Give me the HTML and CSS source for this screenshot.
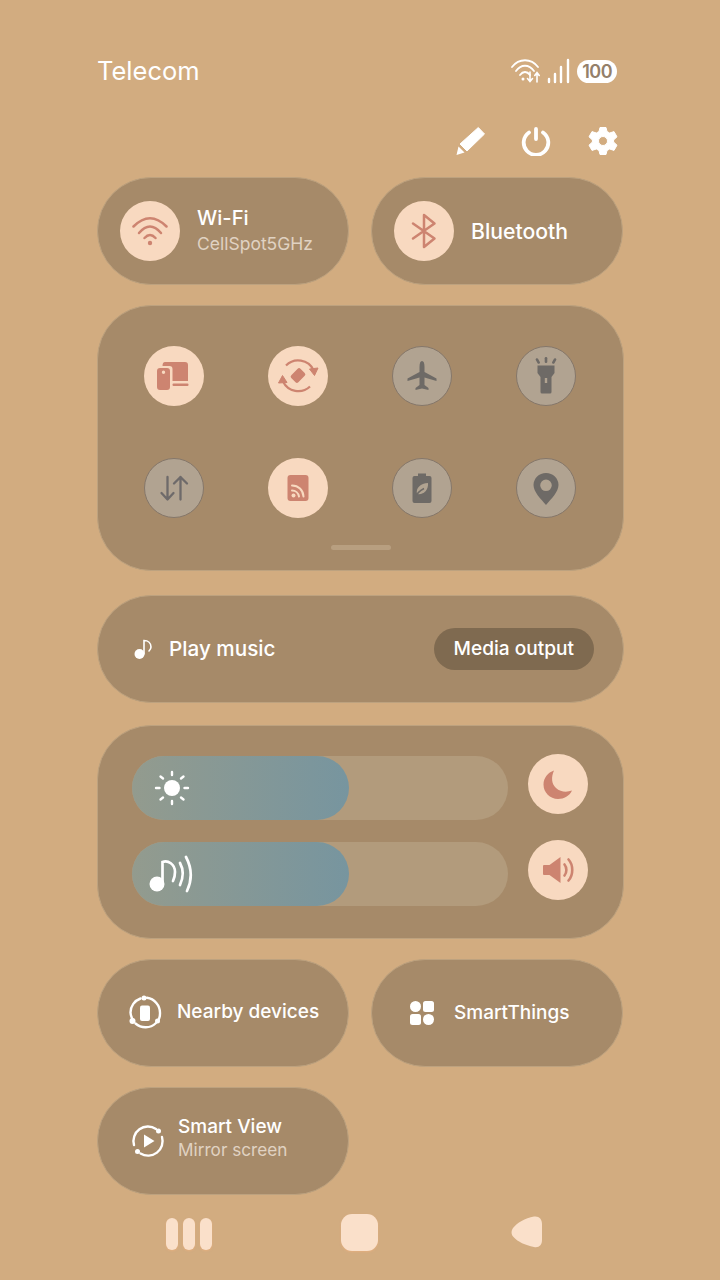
FILE: index.html
```html
<!DOCTYPE html>
<html lang="en">
<head>
  <meta charset="UTF-8">
  <meta name="viewport" content="width=device-width,initial-scale=1">
  <title>Quick panel</title>
  <link rel="stylesheet" href="styles.css">
</head>
<body>

<div class="status">
  <span class="carrier">Telecom</span>
  <div class="status-icons">
    <svg width="36" height="28" viewBox="0 0 36 28" fill="none" stroke="#fff" stroke-width="1.8" stroke-linecap="round">
      <path d="M2 10C9 1 21 1 28 10"/>
      <path d="M6 14C11 7 19 7 24 14"/>
      <path d="M10 18C13 14 17 14 20 18"/>
      <circle cx="13" cy="22" r="1.5" fill="#fff" stroke="none"/>
      <path d="M20 15V24M17.500 21.500L20 24.500L22.500 21.500" stroke-width="1.6"/>
      <path d="M27 25V16M24.800 18.500L27 15.500L29.200 18.500" stroke-width="1.6"/>
    </svg>
    <svg width="24" height="26" viewBox="0 0 24 26" fill="none" stroke="#fff" stroke-width="2.4" stroke-linecap="round">
      <path d="M2 24V21M8 24V16M14 24V9M21 24V2"/>
    </svg>
    <span class="battery">100</span>
  </div>
</div>

<div class="actions">
  <svg class="pencil" width="30" height="30" viewBox="0 0 30 30" fill="#fff">
    <path d="M22.300 1.500L28.500 8L11 25L4 18Z" stroke="#fff" stroke-width="1" stroke-linejoin="round"/>
    <path d="M2.500 20.500L8.500 26.500L.5 29Z"/>
  </svg>
  <svg width="30" height="30" viewBox="0 0 30 30" fill="none" stroke="#fff" stroke-width="3.800" stroke-linecap="round">
    <path d="M8 6.500A12.300 12.300 0 1 0 22 6.500"/>
    <path d="M15 3V13"/>
  </svg>
  <svg width="30" height="30" viewBox="0 0 30 30">
    <path fill="#fff" fill-rule="evenodd" stroke="#fff" stroke-width="1" stroke-linejoin="round" d="M12 1.500H18L19 5.500L21.600 7L26 5.600L29 10.800L25.600 14V16L29 19.200L26 24.400L21.600 23L19 24.500L18 28.500H12L11 24.500L8.400 23L4 24.400L1 19.200L4.400 16V14L1 10.800L4 5.600L8.400 7L11 5.500ZM15 10.500A4.500 4.500 0 1 0 15 19.500A4.500 4.500 0 1 0 15 10.500Z"/>
  </svg>
</div>

<div class="row">
  <div class="pill">
    <div class="circle on">
      <svg width="36" height="36" viewBox="0 0 36 36" fill="none" stroke="#cd8470" stroke-width="2.500" stroke-linecap="round">
        <path d="M1.500 13.500Q18 -3 34.500 13.500"/>
        <path d="M7 20Q18 7 29 20"/>
        <path d="M12.500 25Q18 19 23.500 25"/>
        <circle cx="18" cy="30" r="2.200" fill="#cd8470" stroke="none"/>
      </svg>
    </div>
    <div class="label">
      <div class="name wifi">Wi-Fi</div>
      <div class="sub">CellSpot5GHz</div>
    </div>
  </div>
  <div class="pill">
    <div class="circle on">
      <svg width="36" height="36" viewBox="0 0 36 36" fill="none" stroke="#cd8470" stroke-width="2.500" stroke-linecap="round" stroke-linejoin="round">
        <path d="M7 10.500L28.500 25.500L18 34V2L28.500 10.500L7 25.500"/>
      </svg>
    </div>
    <div class="label">
      <div class="name">Bluetooth</div>
    </div>
  </div>
</div>

<div class="panel toggles">
  <div class="toggle-grid">
    <div class="circle on">
      <svg width="44" height="44" viewBox="0 0 44 44" fill="#cd8470">
        <path d="M13 8H33Q36 8 36 11V27H20.500V15Q20.500 12 17.500 12H10.500Q10.500 8 13 8Z"/>
        <rect x="20.500" y="29.500" width="16" height="2.500" rx="1"/>
        <path fill-rule="evenodd" d="M8 14H15Q18 14 18 17V33Q18 36 15 36H8Q5 36 5 33V17Q5 14 8 14ZM11.500 16.500A1.700 1.700 0 1 0 11.500 19.900A1.700 1.700 0 1 0 11.500 16.500Z"/>
      </svg>
    </div>
    <div class="circle on">
      <svg width="44" height="44" viewBox="0 0 44 44" fill="none" stroke="#cd8470" stroke-width="2.200">
        <path d="M10 11.500A17 17 0 0 1 37.500 16"/>
        <path d="M34 32.500A17 17 0 0 1 7 27.500"/>
        <path d="M33.500 15L42 14L38.500 21.500Z" fill="#cd8470" stroke-width="1" stroke-linejoin="round"/>
        <path d="M2.500 29L11 28.500L6.500 21.500Z" fill="#cd8470" stroke-width="1" stroke-linejoin="round"/>
        <rect x="15.500" y="16.500" width="13" height="10" rx="2" transform="rotate(-45 22 21.500)" fill="#cd8470" stroke="none"/>
      </svg>
    </div>
    <div class="circle off">
      <svg width="36" height="36" viewBox="0 0 36 36" fill="#6e6a66">
        <path d="M18 3Q20.500 3 20.500 9V14L32.500 20.500V23L20.500 19.500V27L24.500 30V32L18 30.500L11.500 32V30L15.500 27V19.500L3.500 23V20.500L15.500 14V9Q15.500 3 18 3Z"/>
      </svg>
    </div>
    <div class="circle off">
      <svg width="36" height="44" viewBox="0 0 36 44" fill="#6e6a66">
        <path fill-rule="evenodd" d="M9.500 11.500H26.500V19L23.500 23V38Q23.500 39.500 22 39.500H14Q12.500 39.500 12.500 38V23L9.500 19ZM16.800 24V29H19.200V24Z"/>
        <rect x="16.700" y="3" width="2.600" height="6" rx="1.200"/>
        <rect x="8.500" y="4" width="2.600" height="6" rx="1.200" transform="rotate(-30 9.800 7)"/>
        <rect x="24.900" y="4" width="2.600" height="6" rx="1.200" transform="rotate(30 26.200 7)"/>
      </svg>
    </div>
    <div class="circle off">
      <svg width="36" height="36" viewBox="0 0 36 36" fill="none" stroke="#6e6a6a" stroke-width="2.300" stroke-linecap="round" stroke-linejoin="round">
        <path d="M11.500 7V29.500M5.500 23L11.500 29.500L17.500 23"/>
        <path d="M24.500 29.500V7M18 13.500L24.500 7L31 13.500"/>
      </svg>
    </div>
    <div class="circle on">
      <svg width="36" height="36" viewBox="0 0 36 36">
        <rect x="7.500" y="5" width="21" height="26" rx="3" fill="#cd8470"/>
        <g fill="none" stroke="#f8d9c0" stroke-width="2" stroke-linecap="round">
          <path d="M12 15.500C18.500 15.500 23 20 23.500 26.500"/>
          <path d="M12 20.500C15.500 20.500 18.500 23 19 26.500"/>
        </g>
        <circle cx="13.500" cy="25.500" r="2" fill="#f8d9c0"/>
      </svg>
    </div>
    <div class="circle off">
      <svg width="36" height="40" viewBox="0 0 36 40">
        <path d="M14 5.500H22V8H25.500Q27.500 8 27.500 10V33Q27.500 35 25.500 35H10.500Q8.500 35 8.500 33V10Q8.500 8 10.500 8H14Z" fill="#6e6a66"/>
        <path d="M13 26C11.500 20 16.500 15.500 24 15C24.500 22 20 27 13 26Z" fill="#b1a391"/>
        <path d="M11 30C13 24.500 16 22.500 20 20.500" fill="none" stroke="#6e6a66" stroke-width="1.400"/>
      </svg>
    </div>
    <div class="circle off">
      <svg width="36" height="38" viewBox="0 0 36 38">
        <path fill="#6e6a66" fill-rule="evenodd" d="M18 4C25 4 30.500 9.500 30.500 16C30.500 23 23 30 18 36C13 30 5.500 23 5.500 16C5.500 9.500 11 4 18 4ZM18 10.500A5.800 5.800 0 1 0 18 22.100A5.800 5.800 0 1 0 18 10.500Z"/>
      </svg>
    </div>
  </div>
  <div class="handle"></div>
</div>

<div class="pill media">
  <div class="media-left">
    <svg width="20" height="24" viewBox="0 0 20 24" fill="none" stroke="#fff" stroke-width="1.600" stroke-linecap="round">
      <circle cx="6.500" cy="17" r="5" fill="#fff" stroke="none"/>
      <path d="M11 17V3.500C15 3.500 18 6 18 10C18 12 17 13 16 14"/>
    </svg>
    <span class="name">Play music</span>
  </div>
  <span class="chip">Media output</span>
</div>

<div class="panel sliders">
  <div class="slider-row">
    <div class="track">
      <div class="fill">
        <svg class="sun" width="38" height="38" viewBox="0 0 38 38" fill="none" stroke="#fff" stroke-width="2.400" stroke-linecap="round">
          <circle cx="19" cy="19" r="8" fill="#fff" stroke="none"/>
          <path d="M19 3V6M19 32V35M3 19H6.500M31.500 19H35M7.500 7.500L10 9.500M28 9.500L30.500 7.500M7.500 30.500L10 28.500M28 28.500L30.500 30.500"/>
        </svg>
      </div>
    </div>
    <div class="circle on">
      <svg width="36" height="36" viewBox="0 0 36 36">
        <path fill="#cd8470" d="M14 4.500C11 11 11.500 18 16 22C20.500 26 26.500 26.500 32 24.500C29.500 30 24 33 18 33C10 33 3.500 26.500 3.500 18.500C3.500 12 8 6.500 14 4.500Z"/>
      </svg>
    </div>
  </div>
  <div class="slider-row">
    <div class="track">
      <div class="fill">
        <svg width="48" height="40" viewBox="0 0 48 40" fill="none" stroke="#fff" stroke-width="2.700" stroke-linecap="round">
          <circle cx="9" cy="30" r="7.500" fill="#fff" stroke="none"/>
          <path d="M14.500 30V8C20 6 27 10 27 18C27 22 26 25 25 27"/>
          <path d="M32 9Q37.500 19 32 31"/>
          <path d="M38 3Q47 20 39 37"/>
        </svg>
      </div>
    </div>
    <div class="circle on">
      <svg width="36" height="36" viewBox="0 0 36 36" fill="none" stroke="#cd8470" stroke-width="2.600" stroke-linecap="round">
        <path d="M3 14Q3 13 4 13H9.500L20.500 5V31L9.500 23H4Q3 23 3 22Z" fill="#cd8470" stroke="none"/>
        <path d="M24.500 12.500C27 15.500 27 20.500 24.500 23.500"/>
        <path d="M28.500 7.500C33.500 13 33.500 23 28.500 28.500"/>
      </svg>
    </div>
  </div>
</div>

<div class="row">
  <div class="pill flat">
    <svg class="flat-icon" width="36" height="36" viewBox="0 0 36 36" fill="none" stroke="#fff" stroke-width="2.400" stroke-linecap="round">
      <path d="M13.500 3.500A15 15 0 0 0 3.500 17.500A15 15 0 0 0 6 25"/>
      <path d="M20 2.800A15.200 15.200 0 0 1 33 18A15 15 0 0 1 31.500 25"/>
      <path d="M8.500 28.500A15 15 0 0 0 29 28"/>
      <circle cx="17" cy="3" r="2.500" fill="#fff" stroke="none"/>
      <circle cx="5.500" cy="26" r="3" fill="#fff" stroke="none"/>
      <circle cx="30.500" cy="26" r="2.500" fill="#fff" stroke="none"/>
      <rect x="13" y="10.500" width="10" height="15.500" rx="2" fill="#fff" stroke="none"/>
    </svg>
    <span class="name small nearby">Nearby devices</span>
  </div>
  <div class="pill flat things">
    <svg class="flat-icon" width="26" height="26" viewBox="0 0 26 26" fill="#fff">
      <circle cx="6.500" cy="6.500" r="5.500"/>
      <rect x="14" y="1" width="11" height="11" rx="2.500"/>
      <rect x="1" y="14" width="11" height="11" rx="2.500"/>
      <circle cx="19.500" cy="19.500" r="5.500"/>
    </svg>
    <span class="name small">SmartThings</span>
  </div>
</div>

<div class="row">
  <div class="pill flat view">
    <svg class="flat-icon" width="34" height="34" viewBox="0 0 34 34" fill="none" stroke="#fff" stroke-width="2.400" stroke-linecap="round">
      <path d="M3 21A14.500 14.500 0 0 1 25 5"/>
      <path d="M31 13A14.500 14.500 0 0 1 9.500 29.500"/>
      <circle cx="27.500" cy="7" r="2.500" fill="#fff" stroke="none"/>
      <circle cx="6.500" cy="27.500" r="2.500" fill="#fff" stroke="none"/>
      <path d="M13 10.500L23.500 17L13 23.500Z" fill="#fff" stroke="none"/>
    </svg>
    <div class="label tight">
      <div class="name small">Smart View</div>
      <div class="sub">Mirror screen</div>
    </div>
  </div>
</div>

<div class="navbar">
  <div class="nav-recent"><span></span><span></span><span></span></div>
  <div class="nav-home"></div>
  <svg class="nav-back" width="32" height="34" viewBox="0 0 32 34">
    <path fill="#fae0ca" d="M2 13C6 8 14 3 23 1.500C28 .8 31 4 31 9V25C31 30 28 33 23 32C14 30 7 27 2.500 22C0 19.500 0 16 2 13Z"/>
  </svg>
</div>

</body>
</html>
```

FILE: styles.css
```css
html, body {
  margin: 0;
  height: 100%;
}

body {
  box-sizing: border-box;
  width: 720px;
  height: 1280px;
  padding: 0 96px 0 97px;
  background-color: #d2ac80;
  font-family: "Inter", "Liberation Sans", sans-serif;
  color: #fff;
  overflow: hidden;
}

svg {
  display: block;
  flex-shrink: 0;
}

.status {
  display: flex;
  justify-content: space-between;
  align-items: center;
  height: 36px;
  padding-top: 52px;
  padding-right: 7px;
}

.carrier {
  font-size: 25.500px;
}

.status-icons {
  display: flex;
  align-items: center;
  gap: 1px;
  padding-top: 2px;
}

.battery {
  margin-left: 5px;
  padding: 0 5px;
  height: 23px;
  line-height: 23px;
  border-radius: 12px;
  background-color: #fff;
  color: #94806a;
  font-size: 18px;
  font-weight: 600;
  letter-spacing: -0.5px;
}

.actions {
  display: flex;
  justify-content: flex-end;
  gap: 37px;
  height: 30px;
  margin-top: 38px;
  margin-right: 6px;
  margin-bottom: 21px;
}

.pencil {
  margin-right: -2px;
}

.row {
  display: flex;
  gap: 22px;
  margin-bottom: 20px;
}

.pill {
  box-sizing: border-box;
  display: flex;
  align-items: center;
  width: 252px;
  height: 108px;
  padding-left: 22px;
  background-color: #a68a69;
  border: 1px solid #bda27f;
  border-radius: 54px;
}

.panel {
  box-sizing: border-box;
  background-color: #a68a69;
  border: 1px solid #bda27f;
  border-radius: 54px;
}

.circle {
  box-sizing: border-box;
  display: flex;
  align-items: center;
  justify-content: center;
  width: 60px;
  height: 60px;
  border-radius: 50%;
  flex-shrink: 0;
}

.circle.on {
  background-color: #f8d9c0;
}

.circle.off {
  background-color: #b1a391;
  border: 1.5px solid #85776a;
}

.label {
  margin-left: 17px;
}

.name {
  font-size: 21.200px;
  font-weight: 500;
  line-height: 26px;
  color: #fff;
}

.name.wifi {
  font-size: 20.200px;
}

.name.small {
  font-size: 19px;
}

.sub {
  font-size: 17.500px;
  line-height: 26px;
  color: #e0d2c2;
}

.toggles {
  height: 266px;
  margin-bottom: 24px;
  padding: 40px 14px 0;
}

.toggle-grid {
  display: grid;
  grid-template-columns: repeat(4, 124px);
  grid-auto-rows: 60px;
  row-gap: 52px;
  justify-items: center;
}

.handle {
  width: 60px;
  height: 5px;
  margin: 27px auto 0;
  border-radius: 3px;
  background-color: #b89f80;
}

.media {
  width: 100%;
  justify-content: space-between;
  margin-bottom: 22px;
  padding: 0 29px 0 35px;
}

.media .name {
  font-size: 20.700px;
}

.media-left {
  display: flex;
  align-items: center;
  gap: 16px;
}

.chip {
  padding: 0 20px;
  height: 42px;
  line-height: 40px;
  border-radius: 21px;
  background-color: #7f6a50;
  font-size: 19.100px;
  font-weight: 500;
  color: #fff;
}

.sliders {
  height: 214px;
  margin-bottom: 20px;
  padding: 30px 34px 0;
}

.slider-row {
  display: flex;
  gap: 20px;
  margin-bottom: 22px;
}

.track {
  width: 376px;
  height: 64px;
  border-radius: 32px;
  background-color: #b29b7c;
}

.fill {
  box-sizing: border-box;
  display: flex;
  align-items: center;
  width: 217px;
  height: 64px;
  padding-left: 16px;
  border-radius: 32px;
  background: linear-gradient(90deg, #939b8e, #77959f);
}

.sun {
  margin-left: 5px;
}

.slider-row .circle {
  margin-top: -2px;
}

.flat {
  padding-left: 29px;
}

.flat .name {
  margin-left: 14px;
}

.flat .label {
  margin-left: 0;
}

.nearby {
  padding-bottom: 3px;
}

.things {
  padding-left: 37px;
}

.things .name {
  margin-left: 19px;
}

.view {
  padding-left: 33px;
}

.tight {
  padding-bottom: 6px;
}

.tight .name {
  margin-left: 13px;
  line-height: 23px;
}

.tight .sub {
  margin-left: 13px;
  font-size: 17.200px;
  line-height: 23px;
}

.navbar {
  display: flex;
  align-items: center;
  height: 34px;
  padding-left: 69px;
}

.nav-recent {
  display: flex;
  gap: 5px;
  margin-top: 3px;
}

.nav-recent span {
  width: 12px;
  height: 32px;
  border-radius: 6px;
  background-color: #fae0ca;
  box-shadow: 0 1px 2px rgba(235, 175, 125, 0.7);
}

.nav-home {
  width: 37px;
  height: 37px;
  margin-left: 129px;
  border-radius: 11px;
  background-color: #fae0ca;
  box-shadow: 0 1px 2px rgba(235, 175, 125, 0.7);
}

.nav-back {
  margin-left: 133px;
}
```
